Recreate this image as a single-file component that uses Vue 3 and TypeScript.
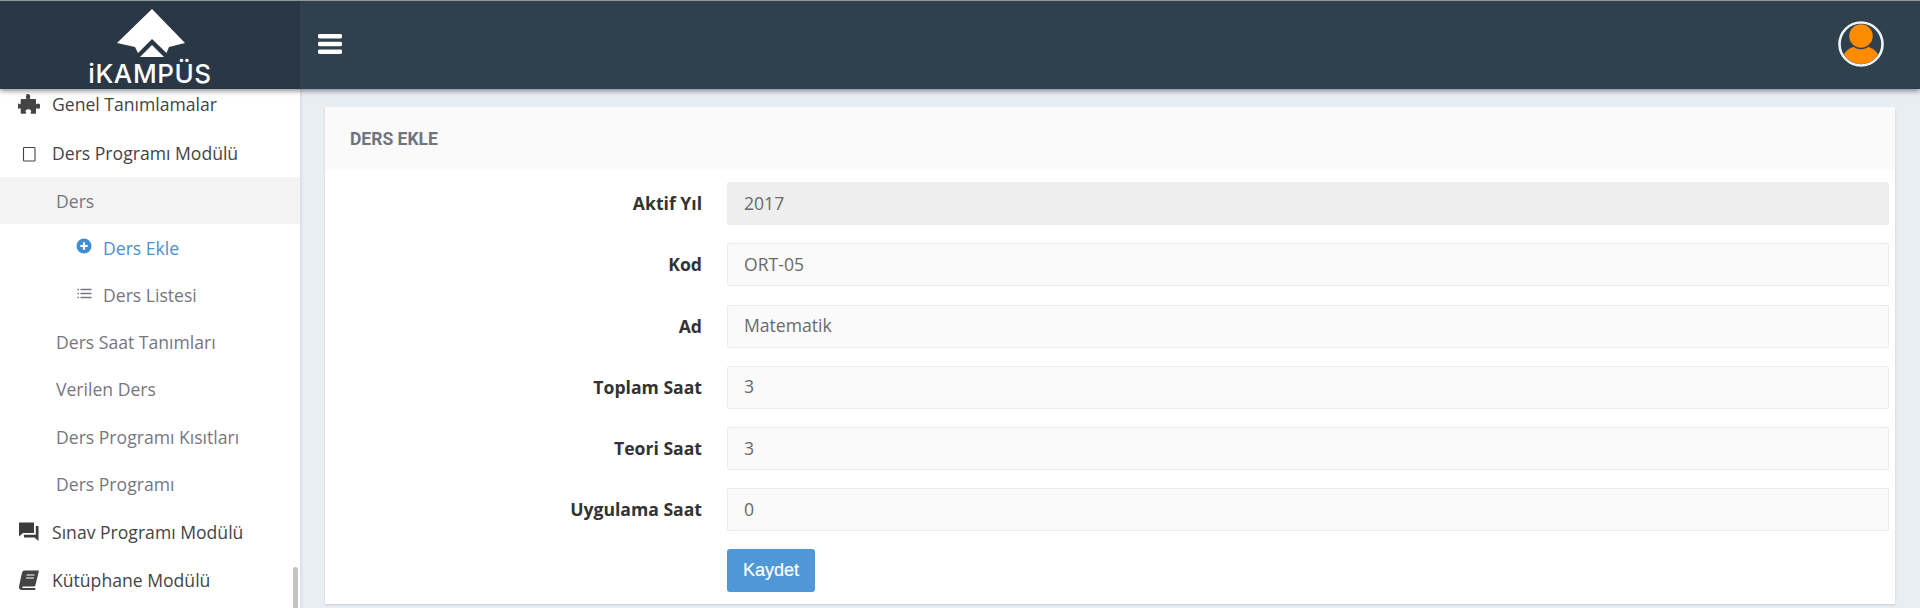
<script setup lang="ts">
const fields = [
  { label: 'Aktif Yıl', value: '2017', readonly: true },
  { label: 'Kod', value: 'ORT-05', readonly: false },
  { label: 'Ad', value: 'Matematik', readonly: false },
  { label: 'Toplam Saat', value: '3', readonly: false },
  { label: 'Teori Saat', value: '3', readonly: false },
  { label: 'Uygulama Saat', value: '0', readonly: false },
]
const subItems = ['Ders Saat Tanımları', 'Verilen Ders', 'Ders Programı Kısıtları', 'Ders Programı']
</script>

<template>
  <div class="page">
    <header class="topbar">
      <div class="brand">
        <svg class="logo" viewBox="116 9 68 48" width="68" height="48">
          <path fill="#fff" d="M151 9 L184 43 L168 47 L165.500 53 L151 39 L137 53 L134 47 L116 43 Z" />
          <path fill="#fff" d="M151 45 L163 57 L139 57 Z" />
        </svg>
        <span class="brand-name">iKAMPÜS</span>
      </div>
      <div class="bar-main">
        <svg class="burger" viewBox="0 0 24 20" width="24" height="20">
          <rect x="0" y="0" width="24" height="4.4" rx="1.4" fill="#fff" />
          <rect x="0" y="7.8" width="24" height="4.4" rx="1.4" fill="#fff" />
          <rect x="0" y="15.6" width="24" height="4.4" rx="1.4" fill="#fff" />
        </svg>
        <svg class="avatar" viewBox="0 0 46 46" width="46" height="46">
          <defs>
            <clipPath id="avatar-clip"><circle cx="23" cy="23" r="20" /></clipPath>
          </defs>
          <circle cx="23" cy="23" r="21.500" fill="#2f404d" stroke="#eef3f6" stroke-width="2.600" />
          <g clip-path="url(#avatar-clip)">
            <ellipse cx="23" cy="40" rx="19" ry="15.500" fill="#ff8c00" />
            <circle cx="23" cy="15" r="12.500" fill="#ff8c00" stroke="#2f404d" stroke-width="1.500" />
          </g>
        </svg>
      </div>
    </header>

    <div class="body">
      <aside class="sidebar">
        <a class="item top genel">
          <svg class="mi" viewBox="0 0 22 22" width="22" height="22">
            <path fill="#444" d="M8 1.500c2 -1.200 4.500 0 4.200 2.200 -.1 .9 -.6 1.300 -.4 1.800 .2 .4 .8 .5 1.700 .5h3.500c.6 0 1 .4 1 1v3.100c0 .9 .4 1.300 .9 1.100 .6 -.3 1 -.7 1.700 -.6 2.200 .3 2.200 5 -.2 5.200 -.8 .1 -1.200 -.4 -1.700 -.6 -.4 -.1 -.7 .3 -.7 1.200v3.300c0 .6 -.4 1 -1 1h-3.500c-.8 0 -1.100 -.4 -.9 -.9 .3 -.7 .6 -1.100 .5 -1.800 -.3 -2.200 -5.300 -2.200 -5.500 .1 -.1 .7 .4 1.200 .6 1.700 .1 .5 -.2 .9 -1 .9h-3.500c-.6 0 -1 -.4 -1 -1v-3.500c0 -.8 -.4 -1.100 -.9 -.9 -.7 .3 -1 .6 -1.800 .5 -2 -.3 -2 -5 .2 -5.200 .7 -.1 1.200 .4 1.700 .6 .5 .1 .8 -.2 .8 -1v-3.100c0 -.6 .4 -1 1 -1h3.300c.9 0 1.300 -.2 1.400 -.6 .1 -.5 -.4 -.9 -.5 -1.500 -.1 -.8 .2 -1.600 1 -2z"/>
          </svg>
          <span>Genel Tanımlamalar</span>
        </a>
        <a class="item top">
          <svg class="mi" viewBox="0 0 22 22" width="22" height="22">
            <rect x="5.500" y="5.500" width="11.500" height="13.500" rx=".8" fill="none" stroke="#444" stroke-width="1.100" />
          </svg>
          <span>Ders Programı Modülü</span>
        </a>
        <a class="item sub open">Ders</a>
        <a class="item leaf active">
          <svg viewBox="0 0 16 16" width="16" height="16">
            <circle cx="8" cy="8" r="7.500" fill="#3f8ed2" />
            <path d="M8 4.300v7.400M4.300 8h7.400" stroke="#fff" stroke-width="2.200" />
          </svg>
          <span>Ders Ekle</span>
        </a>
        <a class="item leaf">
          <svg viewBox="0 0 16 16" width="16" height="16">
            <path d="M1.500 3.500h1.500M1.500 7.500h1.500M1.500 11.500h1.500M4.500 3.500h11M4.500 7.500h11M4.500 11.500h11" stroke="#77757f" stroke-width="1.300" />
          </svg>
          <span>Ders Listesi</span>
        </a>
        <a v-for="s in subItems" :key="s" class="item sub">{{ s }}</a>
        <a class="item top tight">
          <svg class="mi" viewBox="0 0 22 22" width="22" height="22">
            <path fill="#3c3c3c" d="M1 1.500h15v10.500h-11l-4 3.500z" />
            <path fill="#3c3c3c" d="M17.800 5h2.700v15l-4 -3.500h-10.500v-2.700h11.800z" />
          </svg>
          <span>Sınav Programı Modülü</span>
        </a>
        <a class="item top tight">
          <svg class="mi" viewBox="0 0 22 22" width="22" height="22">
            <path fill="#444" d="M6 1.500h15l-3.500 14.500c-.3 1 -1 1.500 -2 1.500h-10.500c-1 0 -1 1.500 0 1.500h12.500l-.5 2h-13c-2.500 0 -3.500 -2 -2.800 -4.500l2.600 -12c.3 -1.500 1.200 -3 2.200 -3z"/>
            <path d="M8.500 6h8M8 9h8" stroke="#fff" stroke-width="1.200" />
          </svg>
          <span>Kütüphane Modülü</span>
        </a>
        <div class="scroll-thumb"></div>
      </aside>

      <main class="content">
        <section class="card">
          <h2 class="card-title">DERS EKLE</h2>
          <form class="form" @submit.prevent>
            <div v-for="f in fields" :key="f.label" class="row">
              <label class="label">{{ f.label }}</label>
              <input class="input" :class="{ readonly: f.readonly }" :value="f.value" :readonly="f.readonly" />
            </div>
            <div class="row actions">
              <span class="label"></span>
              <button class="btn" type="submit">Kaydet</button>
            </div>
          </form>
        </section>
      </main>
    </div>
  </div>
</template>

<style>
html, body { margin: 0; background: #e9eef2; }
</style>

<style scoped>
.page {
  width: 1920px;
  height: 608px;
  overflow: hidden;
  display: flex;
  flex-direction: column;
  font-family: "Open Sans", "Noto Sans", sans-serif;
  background: #e9eef2;
}
.topbar {
  position: relative;
  z-index: 2;
  height: 88px;
  flex: none;
  display: flex;
  border-top: 1px solid #8f979d;
  background: #30404d;
  box-shadow: 0 2px 5px rgba(40, 50, 60, .55);
}
.brand {
  width: 300px;
  flex: none;
  background: #2a3845;
  display: flex;
  flex-direction: column;
  align-items: center;
  padding-top: 8px;
  box-sizing: border-box;
}
.logo { display: block; margin-left: 2px; }
.brand-name {
  font-family: "Inter", "Liberation Sans", sans-serif;
  font-weight: 500;
  font-size: 26px;
  line-height: 24px;
  letter-spacing: .6px;
  color: #fff;
  margin-top: 5px;
}
.bar-main {
  flex: 1;
  display: flex;
  align-items: center;
  justify-content: space-between;
  padding: 0 36px 0 18px;
}
.burger { display: block; margin-top: -3px; }
.avatar { display: block; margin-top: -3px; }
.body {
  flex: 1;
  display: flex;
  min-height: 0;
}
.sidebar {
  position: relative;
  width: 300px;
  flex: none;
  background: #fff;
  box-shadow: 1px 0 3px rgba(40, 50, 60, .12);
  overflow: hidden;
  box-sizing: border-box;
}
.item {
  display: flex;
  align-items: center;
  box-sizing: border-box;
  color: #77757f;
  font-size: 17.600px;
}
.top {
  height: 48.500px;
  padding-left: 18px;
  color: #444;
  gap: 12px;
}
.genel { height: 39.600px; padding-bottom: 9.600px; }
.tight { height: 48.500px; }
.mi { flex: none; }
.sub {
  height: 47.200px;
  padding-left: 56px;
}
.open { background: #f3f3f3; }
.leaf {
  height: 47.200px;
  padding-left: 76px;
  gap: 11px;
}
.leaf svg { flex: none; margin-top: -3px; }
.active { color: #4a8fcf; }
.scroll-thumb {
  position: absolute;
  right: 2px;
  bottom: 0;
  width: 5px;
  height: 41px;
  background: #c4c4c4;
  border-radius: 3px 3px 0 0;
}
.content {
  flex: 1;
  min-width: 0;
  padding: 18px 25px 0;
}
.card {
  background: #fff;
  height: 497px;
  box-sizing: border-box;
  box-shadow: 0 1px 2px rgba(90, 100, 120, .25);
}
.card-title {
  margin: 0;
  height: 63px;
  display: flex;
  align-items: center;
  padding-left: 25px;
  background: #fafafa;
  color: #73737b;
  font-family: "Roboto", "Liberation Sans", sans-serif;
  font-size: 17.500px;
  font-weight: 700;
}
.form {
  display: flex;
  flex-direction: column;
  padding: 12px 6px 0 0;
}
.row {
  display: flex;
  align-items: center;
  height: 43px;
  margin-bottom: 18.300px;
}
.label {
  width: 377px;
  flex: none;
  text-align: right;
  font-size: 17.600px;
  font-weight: 700;
  color: #333;
  margin-right: 25px;
  margin-top: -1px;
}
.input {
  flex: 1;
  min-width: 0;
  height: 43px;
  box-sizing: border-box;
  border: 1px solid #ececec;
  border-radius: 2px;
  background: #fafafa;
  padding: 0 16px 2px;
  font-family: inherit;
  font-size: 17.600px;
  color: #6a6a6a;
  outline: none;
}
.readonly {
  background: #eeeeee;
  border-color: #eeeeee;
}
.actions { margin-top: -1px; }
.btn {
  width: 88px;
  height: 43px;
  border: 0;
  border-radius: 3px;
  background: #4f97d6;
  color: #fff;
  font-family: "Liberation Sans", Arial, sans-serif;
  font-size: 18px;
  font-weight: 400;
  -webkit-text-stroke: .2px #fff;
  padding: 0;
}
</style>
